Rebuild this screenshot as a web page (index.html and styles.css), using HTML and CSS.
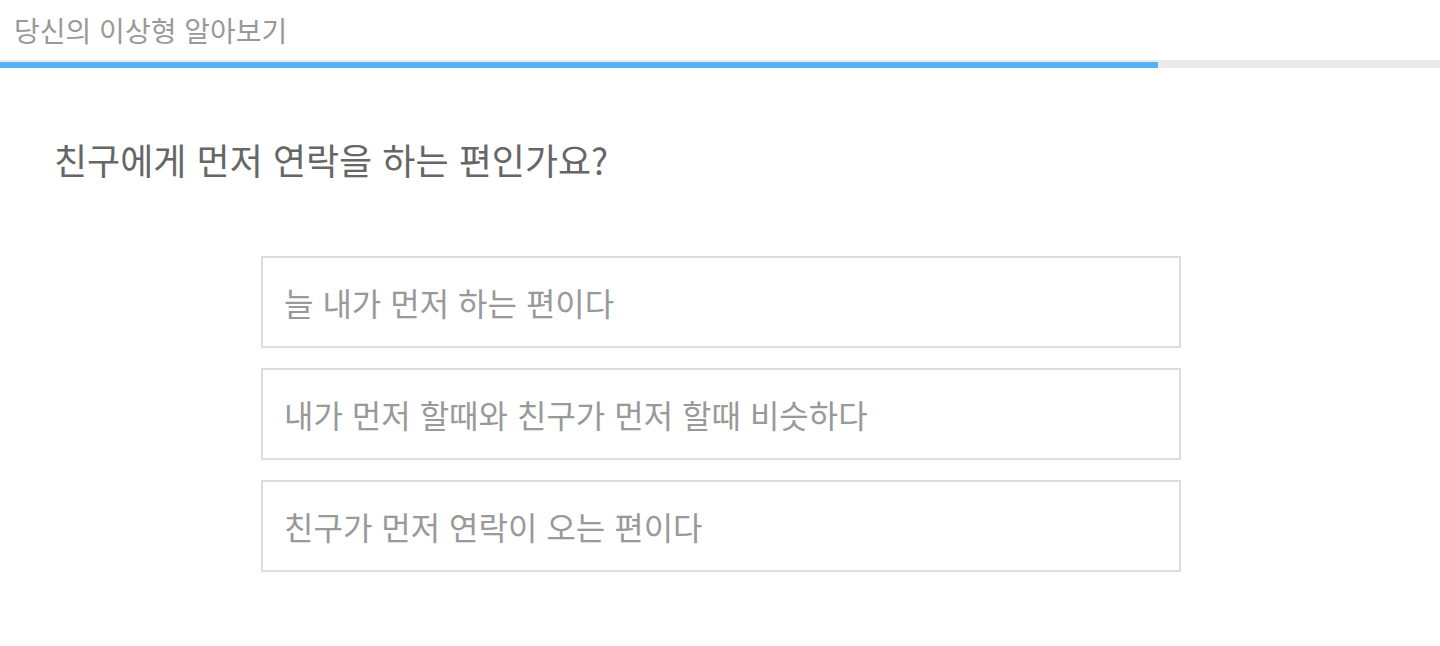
FILE: index.html
```html
<!DOCTYPE html>
<html lang="ko">
<head>
<meta charset="utf-8">
<link rel="stylesheet" href="styles.css">
</head>
<body>
<header class="top">
  <h1 class="title">당신의 이상형 알아보기</h1>
  <div class="track"><div class="bar" style="width:80.42%"></div></div>
</header>
<main class="quiz">
  <h2 class="question">친구에게 먼저 연락을 하는 편인가요?</h2>
  <ul class="options">
    <li class="option">늘 내가 먼저 하는 편이다</li>
    <li class="option">내가 먼저 할때와 친구가 먼저 할때 비슷하다</li>
    <li class="option">친구가 먼저 연락이 오는 편이다</li>
  </ul>
</main>
</body>
</html>
```

FILE: styles.css
```css
html, body {
  margin: 0;
  padding: 0;
  background: #fff;
  font-family: "Noto Sans CJK KR", "Noto Sans", sans-serif;
}
.top {
  display: flex;
  flex-direction: column;
}
.title {
  margin: 0;
  height: 60px;
  padding-left: 14px;
  font-size: 28px;
  font-weight: 400;
  line-height: 60px;
  color: #999;
}
.track {
  height: 8px;
  background: #eaeaea;
  display: flex;
  align-items: flex-end;
}
.bar {
  height: 6px;
  background: #52b1f7;
}
.quiz {
  display: flex;
  flex-direction: column;
}
.question {
  margin: 66px 0 0 54px;
  font-size: 36px;
  font-weight: 400;
  line-height: 50px;
  color: #666;
}
.options {
  list-style: none;
  margin: 72px 0 0 261px;
  padding: 0;
  width: 920px;
  display: flex;
  flex-direction: column;
  gap: 20px;
}
.option {
  box-sizing: border-box;
  height: 92px;
  border: 2px solid #ddd;
  padding: 0 21px;
  display: flex;
  align-items: center;
  font-size: 32px;
  color: #999;
}
```
